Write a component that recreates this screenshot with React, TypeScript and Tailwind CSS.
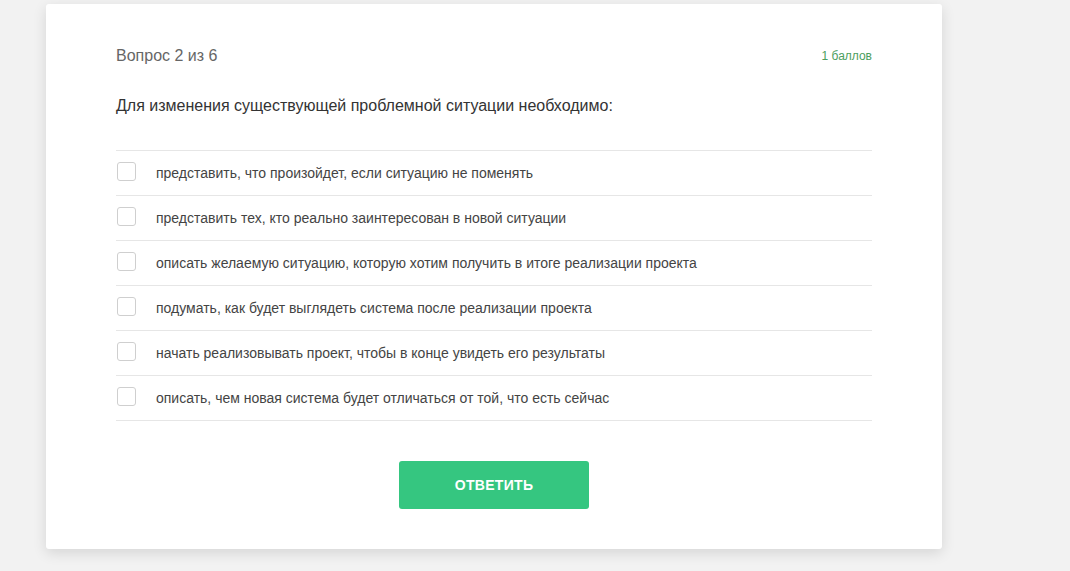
import React from 'react';

const options = [
  'представить, что произойдет, если ситуацию не поменять',
  'представить тех, кто реально заинтересован в новой ситуации',
  'описать желаемую ситуацию, которую хотим получить в итоге реализации проекта',
  'подумать, как будет выглядеть система после реализации проекта',
  'начать реализовывать проект, чтобы в конце увидеть его результаты',
  'описать, чем новая система будет отличаться от той, что есть сейчас',
];

export default function App() {
  return (
    <div
      className="min-h-[571px] bg-[#f2f2f2] pl-[46px] pt-[4px]"
      style={{ fontFamily: '"Liberation Sans", Arial, sans-serif' }}
    >
      <div className="w-[896px] rounded-[3px] bg-white px-[70px] pt-[40px] pb-[40px] shadow-[0_4px_14px_rgba(0,0,0,0.12)]">
        <div className="flex items-center justify-between">
          <span className="text-[16px] leading-[24px] text-[#666]">Вопрос 2 из 6</span>
          <span className="text-[12px] leading-[24px] text-[#4c9e5e]">1 баллов</span>
        </div>

        <p className="mt-[26px] text-[16px] leading-[24px] text-[#333]">
          Для изменения существующей проблемной ситуации необходимо:
        </p>

        <ul className="mt-[32px] border-b border-[#e6e6e6]">
          {options.map((text, index) => (
            <li key={index} className="flex h-[45px] items-center border-t border-[#e6e6e6]">
              <span className="-mt-[4px] ml-px h-[19px] w-[19px] shrink-0 rounded-[3px] border border-[#cfcfcf] bg-white" />
              <span className="ml-[20px] text-[14px] text-[#444]">{text}</span>
            </li>
          ))}
        </ul>

        <div className="mt-[40px] flex justify-center">
          <button className="h-[48px] w-[190px] rounded-[3px] bg-[#35c680] text-[14px] font-bold tracking-[0.3px] text-white">
            ОТВЕТИТЬ
          </button>
        </div>
      </div>
    </div>
  );
}
